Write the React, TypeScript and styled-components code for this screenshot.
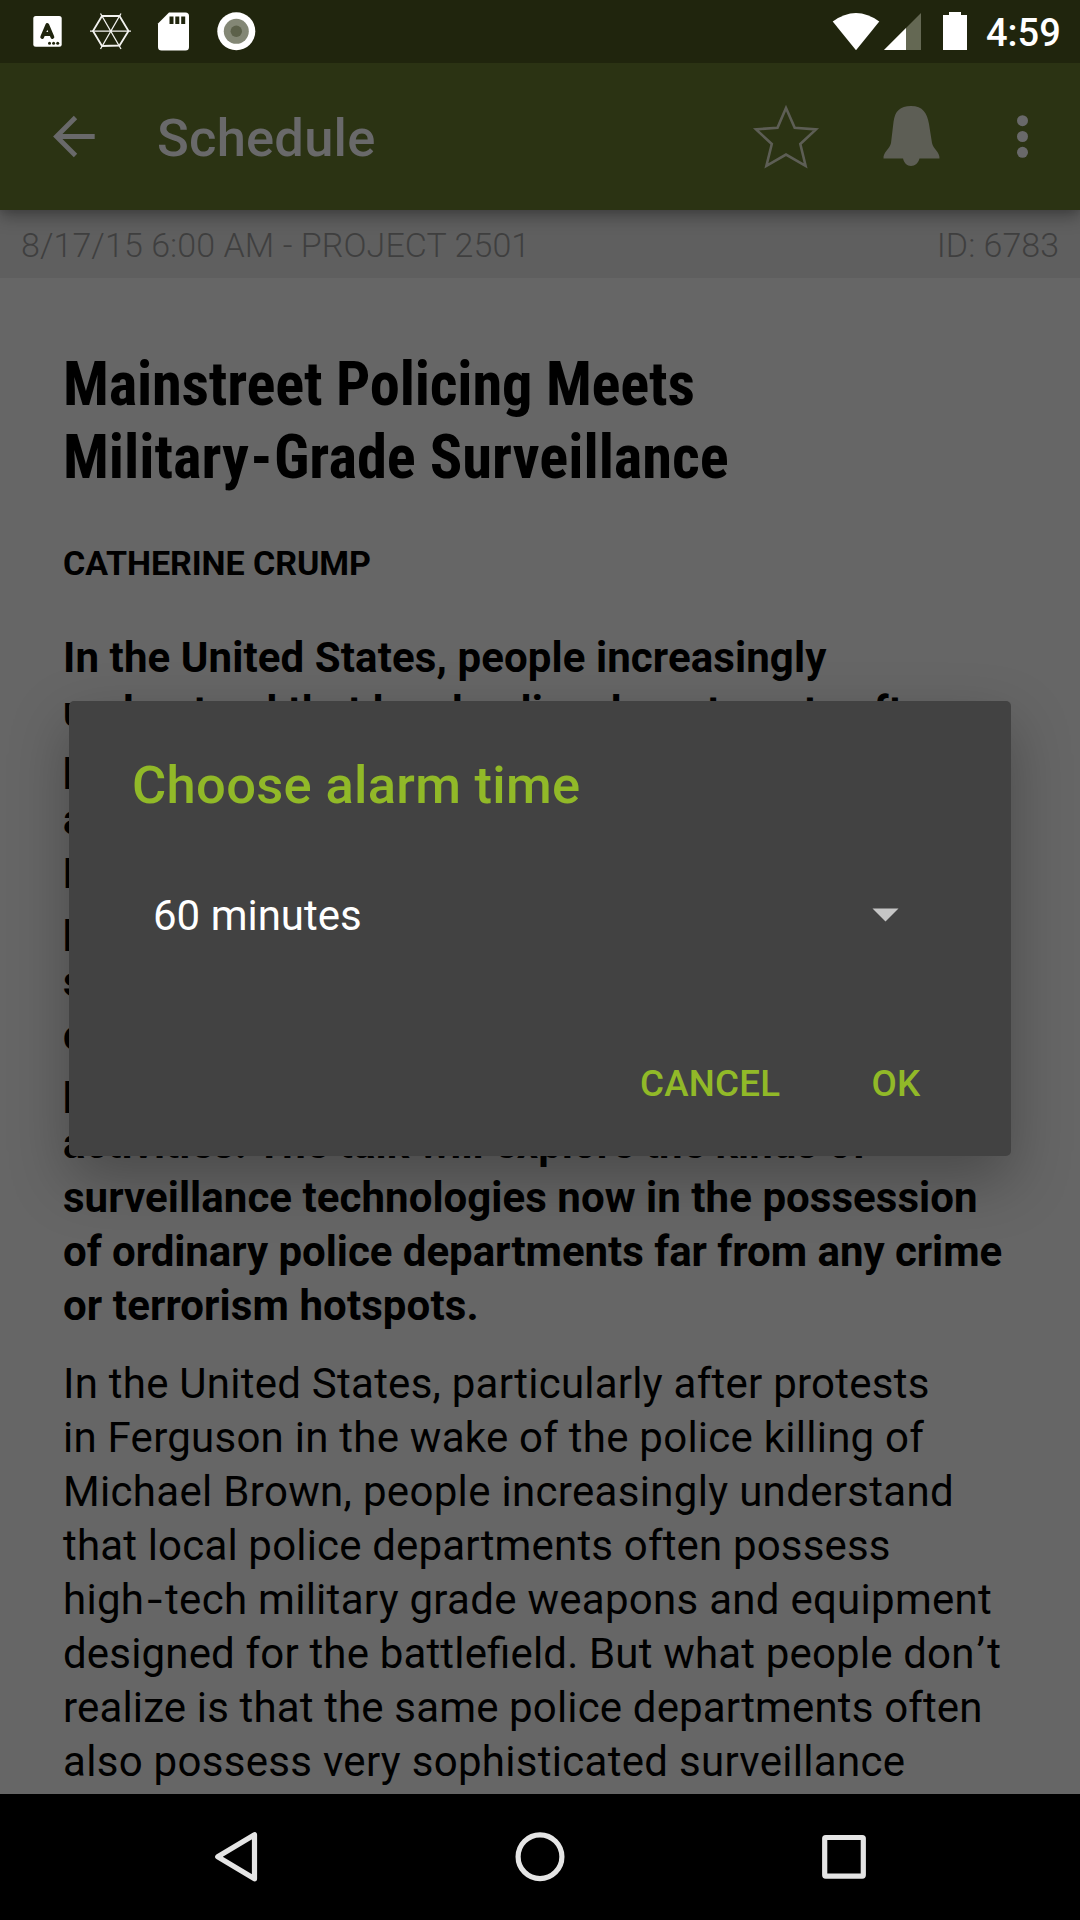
import React from 'react';
import styled, { createGlobalStyle } from 'styled-components';

const GlobalStyle = createGlobalStyle`
  * { box-sizing: border-box; }
  html, body { margin: 0; padding: 0; background: #666666; }
  body { width: 1080px; height: 1920px; overflow: hidden; font-family: Roboto, 'Noto Sans', sans-serif; }
`;

const Screen = styled.div`
  position: relative;
  display: flex;
  flex-direction: column;
  width: 1080px;
  height: 1920px;
  overflow: hidden;
  background: #666666;
`;

const StatusBar = styled.div`
  display: flex;
  flex: none;
  height: 63px;
  justify-content: space-between;
  background: #20250d;
  z-index: 2;
`;

const Drawing = styled.svg`
  display: block;
  flex: none;
`;

const StatusRight = styled.div`
  display: flex;
`;

const Clock = styled.div`
  width: 98px;
  padding-left: 4px;
  color: #ffffff;
  font-size: 38px;
  font-weight: 500;
  line-height: 66px;
  white-space: nowrap;
`;

const AppBar = styled.header`
  display: flex;
  flex: none;
  align-items: center;
  height: 147px;
  background: #2b3313;
  box-shadow: 0 6px 16px rgba(0, 0, 0, 0.34), 0 2px 5px rgba(0, 0, 0, 0.06);
  z-index: 1;
`;

const BarTitle = styled.h1`
  flex: 1;
  margin: 0;
  padding-top: 3px;
  color: #69696a;
  font-size: 52.5px;
  font-weight: 500;
  letter-spacing: 0.22px;
  line-height: 62px;
`;

const InfoBar = styled.div`
  display: flex;
  flex: none;
  justify-content: space-between;
  height: 68px;
  padding: 0 21px;
  background: #5f5f5f;
  color: #3f3f3f;
  font-size: 34px;
  font-weight: 300;
  line-height: 71px;
  white-space: nowrap;
`;

const InfoText = styled.span<{ $ls?: number }>`
  letter-spacing: ${(p) => p.$ls ?? 0}px;
`;

const Article = styled.article`
  flex: 1;
  min-height: 0;
  padding: 70px 0 0 63px;
  color: #000000;
  overflow: hidden;
`;

const Headline = styled.h2`
  margin: 0;
  font-family: 'Roboto Condensed', Roboto, sans-serif;
  font-size: 60.5px;
  font-weight: 700;
  font-stretch: 75%;
  line-height: 73px;
  white-space: nowrap;
`;

const Speaker = styled.div`
  margin-top: 49px;
  font-size: 34px;
  font-weight: 700;
  letter-spacing: -0.05px;
  line-height: 40px;
  white-space: nowrap;
`;

const Paragraph = styled.div<{ $bold?: boolean; $top: number }>`
  margin-top: ${(p) => p.$top}px;
  font-size: 42px;
  font-weight: ${(p) => (p.$bold ? 700 : 400)};
  line-height: 54px;
  white-space: nowrap;
`;

const Line = styled.div<{ $ls?: number }>`
  width: max-content;
  font-feature-settings: 'liga' 1;
  letter-spacing: ${(p) => p.$ls ?? 0}px;
`;

const Hyphen = styled.span<{ $stretch: number; $space: number }>`
  display: inline-block;
  margin: 0 ${(p) => p.$space}px;
  transform: scaleX(${(p) => p.$stretch});
`;

const NavBar = styled.nav`
  flex: none;
  height: 126px;
  background: #000000;
`;

const Dialog = styled.section`
  position: absolute;
  left: 69px;
  top: 701px;
  display: flex;
  flex-direction: column;
  width: 942px;
  height: 455px;
  padding: 0 63px;
  border-radius: 5px;
  background: #424242;
  box-shadow: 0 24px 60px rgba(0, 0, 0, 0.28);
  z-index: 2;
`;

const DialogTitle = styled.h3`
  margin: 53px 0 0;
  color: #91b928;
  font-size: 52.5px;
  font-weight: 500;
  letter-spacing: 0.31px;
  line-height: 62px;
  white-space: nowrap;
`;

const Spinner = styled.div`
  display: flex;
  align-items: center;
  justify-content: space-between;
  height: 60px;
  margin-top: 69px;
  padding: 0 49px 0 21px;
  color: #ffffff;
  font-size: 42px;
`;

const Actions = styled.div`
  display: flex;
  justify-content: flex-end;
  gap: 91px;
  margin-top: 115px;
  padding-right: 27.5px;
`;

const TextButton = styled.button`
  padding: 0;
  border: 0;
  background: none;
  color: #91b928;
  font-family: inherit;
  font-size: 36.75px;
  font-weight: 500;
  letter-spacing: 0.25px;
  line-height: 48px;
`;

type TextLine = { text: string; ls?: number };

const intro: TextLine[] = [
  { text: 'In the United States, people increasingly', ls: 0.1 },
  { text: 'understand that local police departments often' },
  { text: 'possess high-tech military grade weapons' },
  { text: 'and equipment designed for the battlefield.' },
  { text: 'But what people don’t realize is that the same' },
  { text: 'police departments often also possess very' },
  { text: 'sophisticated surveillance technology,' },
  { text: 'capable of tracking ordinary people and their' },
  { text: 'protected speech, movements and political' },
  { text: 'activities. The talk will explore the kinds of' },
  { text: 'surveillance technologies now in the possession', ls: 0.05 },
  { text: 'of ordinary police departments far from any crime', ls: -0.04 },
  { text: 'or terrorism hotspots.', ls: 0.1 },
];

const body: TextLine[] = [
  { text: 'In the United States, particularly after protests', ls: 0.25 },
  { text: 'in Ferguson in the wake of the police killing of', ls: 0.25 },
  { text: 'Michael Brown, people increasingly understand', ls: 0.32 },
  { text: 'that local police departments often possess', ls: 0.17 },
  { text: 'high-tech military grade weapons and equipment', ls: 0.28 },
  { text: 'designed for the battlefield. But what people don’t', ls: 0.17 },
  { text: 'realize is that the same police departments often', ls: 0.15 },
  { text: 'also possess very sophisticated surveillance', ls: 0.3 },
];

const Apostrophe = styled.span`
  margin: 0 2px;
`;

function setMarks(text: string, stretch: number, space: number) {
  return text.split(/([-’])/).map((part, i) => {
    if (part === '-') {
      return (
        <Hyphen key={i} $stretch={stretch} $space={space}>-</Hyphen>
      );
    }
    if (part === '’') return <Apostrophe key={i}>’</Apostrophe>;
    return part;
  });
}

export default function App() {
  return (
    <>
      <GlobalStyle />
      <Screen>
        <StatusBar>
          <Drawing width="280" height="63" viewBox="0 0 280 63" fill="none">
            <rect x="33.3" y="16" width="28.4" height="30.7" rx="2.5" fill="#fff" />
            <path d="M42.2 37 47.3 25 52.4 37M44 34H50.5" stroke="#20250d" strokeWidth="3.8" strokeLinecap="round" strokeLinejoin="round" />
            <g fill="#20250d">
              <circle cx="49.5" cy="43.2" r="1.5" />
              <circle cx="53.6" cy="43.2" r="1.5" />
              <circle cx="57.7" cy="43.2" r="1.5" />
            </g>
            <g stroke="#f2f2ef" strokeWidth="1.3">
              <path d="M90 31.2H131M100.5 13.5 121 49M121 13.5 100.5 49" />
              <path d="M102 16H119.5L128.500 31 119.500 45.500 102 46 93 31Z" strokeWidth="1.8" />
            </g>
            <path d="M169 12.500H185.500Q189 12.500 189 16V47Q189 50.500 185.500 50.500H161.500Q158 50.500 158 47V23.500Z" fill="#fff" />
            <path d="M169.500 16.500h4v7.500h-4zM175.300 16.500h4v7.500h-4zM181.200 16.500h4v7.500h-4z" fill="#20250d" />
            <circle cx="236.300" cy="31.300" r="19" fill="#fff" />
            <circle cx="236.300" cy="31.300" r="12.500" fill="#838775" />
            <circle cx="236.300" cy="31.300" r="5.700" fill="#5c614a" />
          </Drawing>
          <StatusRight>
            <Drawing width="150" height="63" viewBox="832 0 150 63">
              <path d="M832.700 21.500Q856 4.500 879.300 21.500L856 50.200Z" fill="#fff" />
              <path d="M921 13V50H884Z" fill="#646853" />
              <path d="M906 28V50H884Z" fill="#fff" />
              <path d="M943 15H949V12H961V15H967V50H943Z" fill="#fff" />
            </Drawing>
            <Clock>4:59</Clock>
          </StatusRight>
        </StatusBar>
        <AppBar>
          <Drawing width="157" height="147" viewBox="0 63 157 147">
            <path d="M75.500 117.500 56.500 136.500 75.500 155.500M56.500 136.500H94.700" stroke="#69696a" strokeWidth="4.800" fill="none" />
          </Drawing>
          <BarTitle>Schedule</BarTitle>
          <Drawing width="340" height="147" viewBox="740 63 340 147">
            <path d="M786 108 794.700 127.700 816 129.400 800.300 144 805.600 165.800 786 154.500 766.400 165.800 771.800 144 756 129.400 777.500 127.700Z" stroke="#5d5e55" strokeWidth="2.600" fill="none" />
            <path d="M911 106C923 106 927 113 929 124L932 143C933 149 940 152 939.500 158.500H919.500C918.500 163 915 166 911 166S904 163 903 158.500H883.500C883 152 890 149 891 143L893.500 122C895 111 900 106 911 106Z" fill="#5d5e55" />
            <g fill="#69696a">
              <circle cx="1022.500" cy="120.700" r="5.500" />
              <circle cx="1022.500" cy="136.500" r="5.500" />
              <circle cx="1022.500" cy="152.300" r="5.500" />
            </g>
          </Drawing>
        </AppBar>
        <InfoBar>
          <InfoText $ls={0.07}>8/17/15 6:00 AM - PROJECT 2501</InfoText>
          <InfoText>ID: 6783</InfoText>
        </InfoBar>
        <Article>
          <Headline>
            <Line $ls={-0.21}>Mainstreet Policing Meets</Line>
            <Line $ls={-0.03}>{setMarks('Military-Grade Surveillance', 1, 1.6)}</Line>
          </Headline>
          <Speaker>CATHERINE CRUMP</Speaker>
          <Paragraph $bold $top={48}>
            {intro.map((l) => (
              <Line key={l.text} $ls={l.ls}>{l.text}</Line>
            ))}
          </Paragraph>
          <Paragraph $top={24}>
            {body.map((l) => (
              <Line key={l.text} $ls={l.ls}>{setMarks(l.text, 1.3, 4.5)}</Line>
            ))}
          </Paragraph>
        </Article>
        <NavBar>
          <Drawing width="1080" height="126" viewBox="0 1794 1080 126" fill="none" stroke="#e5e5e5" strokeWidth="5.200" strokeLinejoin="round">
            <path d="M254.500 1834.700V1878.800L217.700 1856.800Z" />
            <circle cx="540" cy="1856.700" r="21.900" />
            <rect x="824.700" y="1837.500" width="38.600" height="38.600" rx="1" />
          </Drawing>
        </NavBar>
        <Dialog>
          <DialogTitle>Choose alarm time</DialogTitle>
          <Spinner>
            <span>60 minutes</span>
            <svg width="27" height="14" viewBox="0 0 27 14">
              <path d="M0.500 0.500H26.500L13.500 13.500Z" fill="#c6c6c6" />
            </svg>
          </Spinner>
          <Actions>
            <TextButton>CANCEL</TextButton>
            <TextButton>OK</TextButton>
          </Actions>
        </Dialog>
      </Screen>
    </>
  );
}
